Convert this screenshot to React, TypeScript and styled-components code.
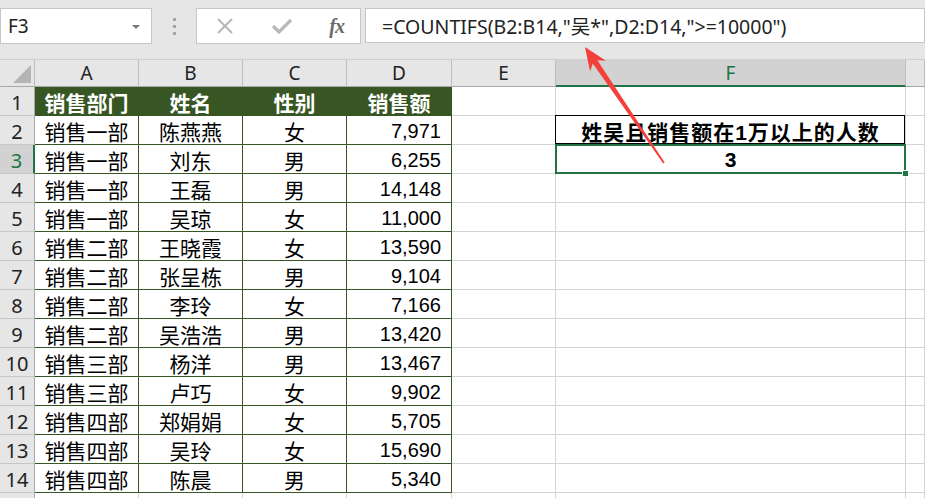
import React from 'react'
import styled, { createGlobalStyle, css } from 'styled-components'


const GREEN = '#375623'
const SELECT = '#217346'
const GRID = '#d4d4d4'
const UI_FONT = `"Noto Sans", "Noto Sans CJK SC", sans-serif`
const CELL_FONT = `"Liberation Sans", "Noto Sans CJK SC", sans-serif`

const COLUMNS = ['A', 'B', 'C', 'D', 'E', 'F', '']

const HEADER = ['销售部门', '姓名', '性别', '销售额']

const ROWS: string[][] = [
  ['销售一部', '陈燕燕', '女', '7,971'],
  ['销售一部', '刘东', '男', '6,255'],
  ['销售一部', '王磊', '男', '14,148'],
  ['销售一部', '吴琼', '女', '11,000'],
  ['销售二部', '王晓霞', '女', '13,590'],
  ['销售二部', '张呈栋', '男', '9,104'],
  ['销售二部', '李玲', '女', '7,166'],
  ['销售二部', '吴浩浩', '男', '13,420'],
  ['销售三部', '杨洋', '男', '13,467'],
  ['销售三部', '卢巧', '女', '9,902'],
  ['销售四部', '郑娟娟', '女', '5,705'],
  ['销售四部', '吴玲', '女', '15,690'],
  ['销售四部', '陈晨', '男', '5,340'],
]


const GlobalStyle = createGlobalStyle`
  html, body {
    margin: 0;
    padding: 0;
    background: #fff;
    overflow: hidden;
  }
  * { box-sizing: border-box; }
`


function arrowPoints() {
  const tip = [585, 47]
  const tail = [664, 163]
  const dx = tip[0] - tail[0]
  const dy = tip[1] - tail[1]
  const len = Math.hypot(dx, dy)
  const u = [dx / len, dy / len]
  const n = [-u[1], u[0]]
  const at = (base: number[], along: number, side: number) =>
    `${(base[0] + u[0] * along + n[0] * side).toFixed(1)},${(base[1] + u[1] * along + n[1] * side).toFixed(1)}`
  return [
    at(tip, 0, 0),
    at(tip, -23, 9.5),
    at(tip, -18, 2.8),
    at(tail, 0, 0.8),
    at(tail, 0, -0.8),
    at(tip, -18, -2.8),
    at(tip, -23, -9.5),
  ].join(' ')
}


const App: React.FC = function () {
  return (
    <Page>
      <GlobalStyle />

      <FormulaBar>
        <NameBox>
          F3
          <Caret />
        </NameBox>
        <Grip><i /><i /><i /></Grip>
        <ButtonBox>
          <svg width="20" height="20" viewBox="0 0 20 20">
            <path d="M3 3 L17 17 M17 3 L3 17" stroke="#b8b8b8" strokeWidth="2" fill="none" />
          </svg>
          <svg width="22" height="20" viewBox="0 0 22 20">
            <path d="M2 10 L8 16 L20 4" stroke="#b8b8b8" strokeWidth="3.2" fill="none" />
          </svg>
          <Fx>fx</Fx>
        </ButtonBox>
        <FormulaInput>=COUNTIFS(B2:B14,"吴*",D2:D14,"&gt;=10000")</FormulaInput>
      </FormulaBar>

      <Sheet>
        <Corner />
        {COLUMNS.map((c, i) =>
          <ColHead key={i} $active={c === 'F'}>{c}</ColHead>
        )}

        <RowHead>1</RowHead>
        {HEADER.map((h, j) => <TableHead key={h} $right={j === 3}>{h}</TableHead>)}
        <Cell />
        <Cell />
        <Cell />

        {Array.from({ length: 14 }, (_, i) => {
          const r = i + 2
          const data = ROWS[i]
          return (
            <React.Fragment key={r}>
              <RowHead $active={r === 3}>{r <= 14 ? r : ''}</RowHead>
              {data
                ? data.map((v, j) =>
                    <Cell key={j} $table $number={j === 3}>{v}</Cell>)
                : [0, 1, 2, 3].map(j => <Cell key={j} />)}
              <Cell />
              {r === 2
                ? <LabelCell>姓吴且销售额在1万以上的人数</LabelCell>
                : r === 3
                  ? <ResultCell>3<FillHandle /></ResultCell>
                  : <Cell />}
              <Cell />
            </React.Fragment>
          )
        })}
      </Sheet>

      <Arrow width="925" height="498" viewBox="0 0 925 498">
        <polygon points={arrowPoints()} fill="#f2403a" />
      </Arrow>
    </Page>
  )
}


const Page = styled.div`
  position: relative;
  width: 925px;
  height: 498px;
  overflow: hidden;
  background: #fff;
`

const FormulaBar = styled.div`
  display: flex;
  align-items: flex-start;
  height: 60px;
  padding-top: 8px;
  background: #e6e6e6;
  border-bottom: 1px solid #d0d0d0;
`

const boxStyle = css`
  height: 36px;
  background: #fff;
  border: 1px solid #c6c6c6;
  display: flex;
  align-items: center;
`

const NameBox = styled.div`
  ${boxStyle}
  position: relative;
  width: 152px;
  padding-left: 7px;
  font: 19px ${UI_FONT};
  color: #222;
`

const Caret = styled.span`
  position: absolute;
  right: 11px;
  top: 16px;
  border-left: 4px solid transparent;
  border-right: 4px solid transparent;
  border-top: 4px solid #777;
`

const Grip = styled.div`
  width: 44px;
  height: 36px;
  display: flex;
  flex-direction: column;
  align-items: center;
  justify-content: center;
  gap: 4px;

  > i {
    width: 3px;
    height: 3px;
    background: #a3a3a3;
  }
`

const ButtonBox = styled.div`
  ${boxStyle}
  width: 165px;
  padding: 0 16px 0 18px;
  justify-content: space-between;
`

const Fx = styled.span`
  font: italic bold 20px "Liberation Serif", serif;
  color: #6a6a6a;
  letter-spacing: -1px;
`

const FormulaInput = styled.div`
  ${boxStyle}
  flex: 1;
  margin-left: 4px;
  height: 35px;
  padding-left: 16px;
  font: 19.5px ${UI_FONT};
  color: #222;
  white-space: nowrap;
`

const Sheet = styled.div`
  display: grid;
  grid-template-columns: 35px 104px 104px 104px 105px 104px 350px 1fr;
  grid-template-rows: 27px;
  grid-auto-rows: 29px;
`

const Corner = styled.div`
  position: relative;
  background: #e6e6e6;
  border-right: 1px solid #bdbdbd;
  border-bottom: 1px solid #a8a8a8;

  &::after {
    content: '';
    position: absolute;
    right: 3px;
    bottom: 3px;
    border-left: 18px solid transparent;
    border-bottom: 18px solid #b4b4b4;
  }
`

const ColHead = styled.div<{ $active?: boolean }>`
  display: flex;
  align-items: center;
  justify-content: center;
  background: ${p => p.$active ? '#d2d2d2' : '#e6e6e6'};
  border-right: 1px solid #bdbdbd;
  border-bottom: ${p => p.$active ? `2px solid ${SELECT}` : '1px solid #a8a8a8'};
  font: 19px ${UI_FONT};
  color: ${p => p.$active ? SELECT : '#222'};
`

const RowHead = styled.div<{ $active?: boolean }>`
  display: flex;
  align-items: center;
  justify-content: center;
  padding-top: 2px;
  background: ${p => p.$active ? '#d2d2d2' : '#e6e6e6'};
  border-right: ${p => p.$active ? `2px solid ${SELECT}` : '1px solid #a8a8a8'};
  border-bottom: 1px solid #c6c6c6;
  font: 20px ${UI_FONT};
  color: ${p => p.$active ? SELECT : '#222'};
`

const Cell = styled.div<{ $table?: boolean; $number?: boolean; $right?: boolean }>`
  display: flex;
  align-items: center;
  justify-content: ${p => p.$number ? 'flex-end' : 'center'};
  padding: 2px ${p => p.$number ? '10px' : '0'} 0 0;
  border-right: 1px solid ${p => p.$table ? GREEN : GRID};
  border-bottom: 1px solid ${p => p.$table ? GREEN : GRID};
  font: ${p => p.$number ? '20px' : '21px'} ${CELL_FONT};
  color: #000;
  white-space: nowrap;
`

const TableHead = styled(Cell)`
  background: ${GREEN};
  border-right: 1px solid ${GREEN};
  border-bottom: 1px solid ${GREEN};
  color: #fff;
  font-weight: bold;
`

const LabelCell = styled(Cell)`
  position: relative;
  font-weight: bold;
  letter-spacing: 1px;

  &::after {
    content: '';
    position: absolute;
    top: -1px;
    left: -1px;
    right: 0;
    bottom: 0;
    border: 1px solid #000;
  }
`

const ResultCell = styled(Cell)`
  position: relative;
  font-weight: bold;

  &::after {
    content: '';
    position: absolute;
    top: -1px;
    left: -1px;
    right: -1px;
    bottom: -1px;
    border: 2px solid ${SELECT};
  }
`

const FillHandle = styled.span`
  position: absolute;
  right: -4px;
  bottom: -4px;
  width: 7px;
  height: 7px;
  background: ${SELECT};
  border: 1px solid #fff;
  z-index: 1;
`

const Arrow = styled.svg`
  position: absolute;
  top: 0;
  left: 0;
  pointer-events: none;
`


export default App
